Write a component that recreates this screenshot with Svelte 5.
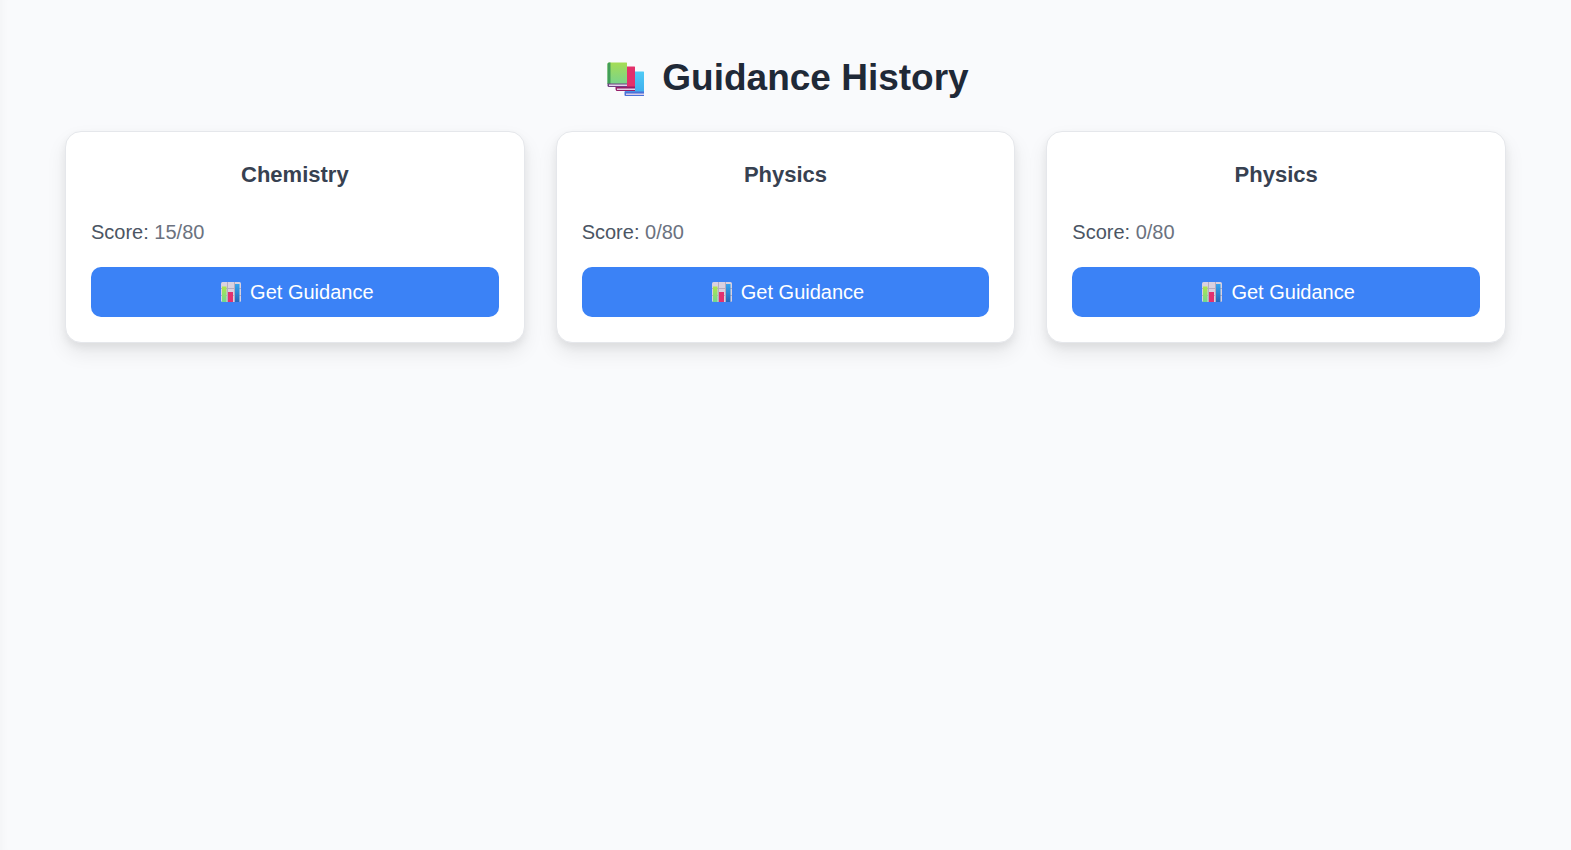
<script lang="ts">
	interface Guidance {
		id: number;
		subject: string;
		score: number;
		total: number;
	}

	const history: Guidance[] = [
		{ id: 1, subject: 'Chemistry', score: 15, total: 80 },
		{ id: 2, subject: 'Physics', score: 0, total: 80 },
		{ id: 3, subject: 'Physics', score: 0, total: 80 }
	];
</script>

<main class="page">
	<h1 class="heading">
		<svg class="books" viewBox="0 0 38 36" aria-hidden="true">
			<defs>
				<linearGradient id="book-green" x1="0" y1="0" x2="0" y2="1">
					<stop offset="0" stop-color="#a5dc55" />
					<stop offset="1" stop-color="#79d48b" />
				</linearGradient>
				<linearGradient id="book-blue" x1="0" y1="0" x2="0" y2="1">
					<stop offset="0" stop-color="#50cbf5" />
					<stop offset="1" stop-color="#3faeee" />
				</linearGradient>
			</defs>
			<!-- blue book -->
			<path d="M20 9.500h16.500q.5 0 .5.5v20.500H18V12z" fill="url(#book-blue)" />
			<path d="M17.500 29.500H37V34H18.500q-1 0-1-1z" fill="#4a72d8" />
			<path d="M19 31.500h18V33H19z" fill="#d8cdec" />
			<!-- red book -->
			<path d="M10 4.500h17.500q.5 0 .5.5v20H9V5z" fill="#e3306a" />
			<path d="M8.500 24.500H28V29H9.500q-1-1-1-2z" fill="#961e68" />
			<path d="M10 26.500h18V28H10z" fill="#e4cfe5" />
			<!-- green book -->
			<path d="M2 .5h17.500q.5 0 .5.5v21H.5V2Q.5.5 2 .5z" fill="url(#book-green)" />
			<path d="M.5 2Q.5.5 2 .5h1.500V22H.5z" fill="#429e58" />
			<path d="M.5 21.500H20V25H2q-1.500 0-1.500-1.500z" fill="#704081" />
			<path d="M2 22.500h18V24H2z" fill="#e2d5ea" />
		</svg>
		Guidance History
	</h1>

	<div class="cards">
		{#each history as item (item.id)}
			<article class="card">
				<h2 class="subject">{item.subject}</h2>
				<p class="score">Score: <span class="value">{item.score}/{item.total}</span></p>
				<button type="button" class="guidance-btn">
					<svg class="chart" viewBox="0 0 20 20" aria-hidden="true">
						<defs>
							<linearGradient id="bar-green-{item.id}" x1="0" y1="0" x2="0" y2="1">
								<stop offset="0" stop-color="#b0e54c" />
								<stop offset="1" stop-color="#70d890" />
							</linearGradient>
							<linearGradient id="bar-blue-{item.id}" x1="0" y1="0" x2="0" y2="1">
								<stop offset="0" stop-color="#35a5ee" />
								<stop offset="1" stop-color="#2468bb" />
							</linearGradient>
						</defs>
						<rect width="20" height="20" rx="1.5" fill="#d9d1df" />
						<path d="M6.500 0v20M13.500 0v20M0 6.500h20M0 13.500h20" stroke="#b5abc0" fill="none" />
						<rect x="1" y="4.5" width="4.5" height="15.5" fill="url(#bar-green-{item.id})" />
						<rect x="7" y="10" width="5" height="10" fill="#e3306f" />
						<rect x="14" y="2" width="4.5" height="18" fill="url(#bar-blue-{item.id})" />
					</svg>
					Get Guidance
				</button>
			</article>
		{/each}
	</div>
</main>

<style>
	:global(body) {
		margin: 0;
		background: #f9fafc;
	}

	.page {
		box-sizing: border-box;
		min-height: 100vh;
		padding: 56px 32px;
		font-family: 'Liberation Sans', Arial, sans-serif;
		box-shadow: inset 12px 0 12px -12px rgba(0, 0, 0, 0.04);
	}

	.heading {
		display: flex;
		align-items: center;
		justify-content: center;
		gap: 17px;
		margin: 0 0 31px;
		font-size: 37px;
		line-height: 44px;
		font-weight: 700;
		color: #1f2937;
	}

	.books {
		width: 38px;
		height: 36px;
		margin: 4px 0 0 5px;
	}

	.cards {
		display: grid;
		grid-template-columns: repeat(auto-fit, minmax(320px, 1fr));
		gap: 31px;
		max-width: 1441px;
		margin: 0 auto;
	}

	.card {
		padding: 25px;
		background: #fff;
		border: 1px solid #e5e7eb;
		border-radius: 16px;
		box-shadow:
			0 10px 20px rgba(0, 0, 0, 0.08),
			0 4px 8px rgba(0, 0, 0, 0.06);
	}

	.subject {
		margin: 0 0 23px;
		font-size: 22px;
		line-height: 36px;
		font-weight: 600;
		text-align: center;
		color: #374151;
	}

	.score {
		margin: 0 0 19px;
		font-size: 20px;
		line-height: 32px;
		color: #4b5563;
	}

	.value {
		color: #6b7280;
	}

	.guidance-btn {
		display: flex;
		align-items: center;
		justify-content: center;
		gap: 9px;
		width: 100%;
		padding: 12px 16px;
		border: none;
		border-radius: 10px;
		background: #3b82f6;
		color: #fff;
		font-family: inherit;
		font-size: 20px;
		line-height: 26px;
		cursor: pointer;
	}

	.guidance-btn:hover {
		background: #2563eb;
	}

	.chart {
		width: 20px;
		height: 20px;
		margin-left: 5px;
	}
</style>
